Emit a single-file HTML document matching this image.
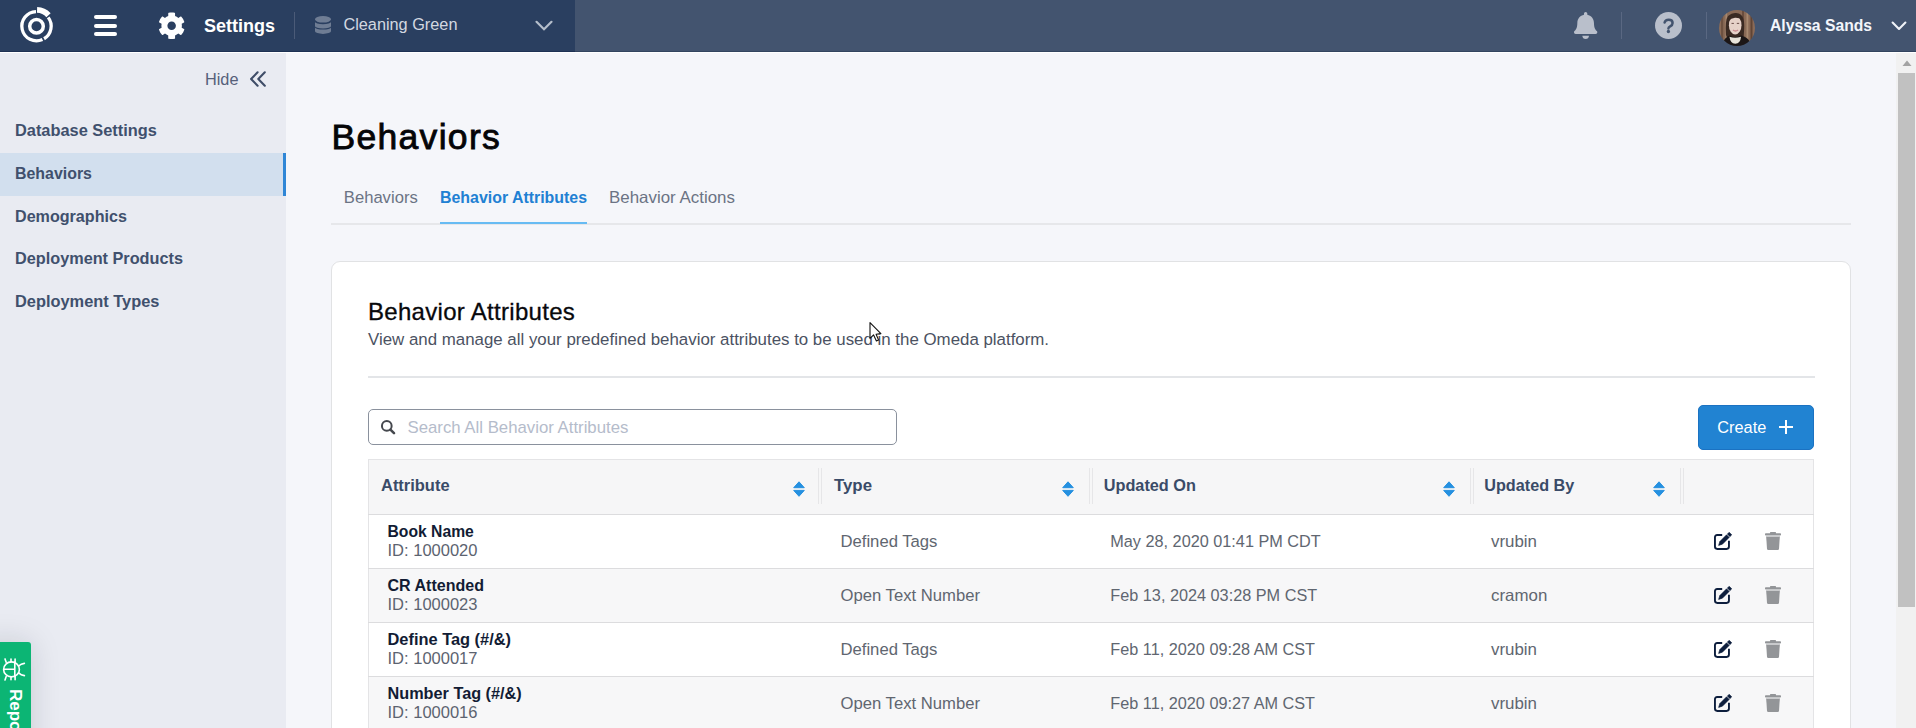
<!DOCTYPE html>
<html><head><meta charset="utf-8"><style>
*{box-sizing:border-box;margin:0;padding:0}
html,body{width:1916px;height:728px;overflow:hidden;font-family:"Liberation Sans",sans-serif;background:#f5f6fa;position:relative}
.t{position:absolute;white-space:nowrap}
.b{position:absolute}
svg{position:absolute;overflow:visible}
</style></head><body>
<div class="b" style="left:0;top:0;width:1916px;height:52px;background:#43546f"></div>
<div class="b" style="left:0;top:0;width:575px;height:52px;background:#2a3f60"></div>
<div class="b" style="left:0;top:51px;width:575px;height:1px;background:#1d3153"></div>
<div class="b" style="left:575px;top:51px;width:1341px;height:1px;background:#33445f"></div>
<div class="b" style="left:0;top:52px;width:1916px;height:1px;background:#ffffff"></div>
<svg style="left:0;top:0" width="80" height="52" viewBox="0 0 80 52">
<circle cx="36.5" cy="26.2" r="6.8" fill="none" stroke="#fff" stroke-width="3.5"/>
<path d="M 35.99 11.56 A 14.65 14.65 0 1 0 42.46 39.58" fill="none" stroke="#fff" stroke-width="3.3"/>
<path d="M 44.05 38.76 A 14.65 14.65 0 0 0 48.20 17.38" fill="none" stroke="#fff" stroke-width="3.3"/>
<path d="M 37.07 9.91 A 16.3 16.3 0 0 1 48.52 15.19" fill="none" stroke="#fff" stroke-width="5.8"/>
</svg>
<div class="b" style="left:94px;top:15px;width:23px;height:4px;border-radius:2px;background:#fff"></div>
<div class="b" style="left:94px;top:23.5px;width:23px;height:4px;border-radius:2px;background:#fff"></div>
<div class="b" style="left:94px;top:32px;width:23px;height:4px;border-radius:2px;background:#fff"></div>
<svg style="left:158.3px;top:11.8px" width="27.3" height="27.5" viewBox="0 0 512 512" preserveAspectRatio="none">
<path fill="#fff" d="M487.4 315.7l-42.6-24.6c4.3-23.2 4.3-47 0-70.2l42.6-24.6c4.9-2.8 7.1-8.6 5.5-14-11.1-35.6-30-67.8-54.7-94.6-3.8-4.1-10-5.1-14.8-2.3L380.8 110c-17.9-15.4-38.5-27.3-60.8-35.1V25.8c0-5.600-3.900-10.500-9.400-11.700-36.700-8.200-74.300-7.800-109.200 0-5.500 1.200-9.400 6.100-9.400 11.700V75c-22.2 7.9-42.8 19.8-60.8 35.1L88.7 85.5c-4.900-2.800-11-1.900-14.800 2.300-24.700 26.700-43.600 58.900-54.700 94.600-1.700 5.400.600 11.200 5.500 14L67.300 221c-4.300 23.200-4.300 47 0 70.200l-42.600 24.600c-4.900 2.800-7.100 8.600-5.500 14 11.100 35.600 30 67.800 54.700 94.600 3.800 4.100 10 5.100 14.800 2.300l42.600-24.600c17.900 15.400 38.500 27.300 60.800 35.100v49.200c0 5.600 3.900 10.500 9.400 11.700 36.700 8.200 74.300 7.800 109.200 0 5.500-1.200 9.400-6.100 9.400-11.700v-49.200c22.200-7.900 42.800-19.800 60.800-35.100l42.600 24.600c4.900 2.800 11 1.900 14.800-2.300 24.700-26.700 43.600-58.900 54.700-94.600 1.500-5.500-.7-11.300-5.600-14.100zM256 336c-44.100 0-80-35.900-80-80s35.900-80 80-80 80 35.900 80 80-35.900 80-80 80z"/>
</svg>
<div class="t" style="left:204px;top:17px;font-size:18px;line-height:18px;font-weight:bold;color:#fff;">Settings</div>
<div class="b" style="left:294px;top:12px;width:1px;height:27px;background:#4b5b78"></div>
<svg style="left:315px;top:16px" width="16" height="18" viewBox="0 0 16 18">
<ellipse cx="8" cy="3.3" rx="8" ry="3.3" fill="#6f7d94"/>
<path d="M0 6 A8 2.2 0 0 0 16 6 V10.3 A8 2.1 0 0 1 0 10.3Z" fill="#6f7d94"/>
<path d="M0 11.6 A8 1.9 0 0 0 16 11.6 V15.2 A8 2.7 0 0 1 0 15.2Z" fill="#6f7d94"/>
</svg>
<div class="t" style="left:343.4px;top:16px;font-size:16.3px;line-height:16.3px;font-weight:normal;color:#d3d8e0;">Cleaning Green</div>
<svg style="left:535px;top:20px" width="18" height="12" viewBox="0 0 18 12">
<path d="M1.5 1.8 L9 9.3 L16.5 1.8" fill="none" stroke="#b5becb" stroke-width="2.2" stroke-linecap="round"/>
</svg>
<svg style="left:1574px;top:12px" width="23.3" height="27" viewBox="0 0 448 512" preserveAspectRatio="none">
<path fill="#b9bfcb" d="M224 512c35.300 0 63.900-28.700 63.900-64H160.100c0 35.300 28.600 64 63.900 64zm215.400-149.700c-19.300-20.800-55.500-52-55.500-154.300 0-77.700-54.500-139.900-127.900-155.200V32c0-17.700-14.300-32-32-32s-32 14.300-32 32v20.800C118.600 68.100 64.100 130.300 64.100 208c0 102.300-36.200 133.500-55.500 154.300-6 6.400-8.600 14.100-8.600 21.700.1 16.400 13 32 32.100 32h383.800c19.100 0 32-15.600 32.100-32 .1-7.600-2.600-15.300-8.600-21.700z"/>
</svg>
<div class="b" style="left:1621px;top:12px;width:1px;height:27px;background:#5a6882"></div>
<svg style="left:1655px;top:12px" width="27" height="27" viewBox="0 0 27 27">
<circle cx="13.5" cy="13.5" r="13.5" fill="#b9bfcb"/>
<path d="M9.6 10.6 Q10.2 7.7 13.7 7.7 Q17.6 7.7 17.6 10.9 Q17.6 13 15.2 14.3 Q13.4 15.3 13.4 16.6" fill="none" stroke="#43546f" stroke-width="2.5" stroke-linecap="round"/>
<circle cx="13.4" cy="19.5" r="1.65" fill="#43546f"/>
</svg>
<div class="b" style="left:1706px;top:12px;width:1px;height:27px;background:#5a6882"></div>
<svg style="left:1719px;top:10px" width="36" height="36" viewBox="0 0 36 36">
<defs><clipPath id="av"><circle cx="18" cy="18" r="18"/></clipPath>
<filter id="bl" x="-10%" y="-10%" width="120%" height="120%"><feGaussianBlur stdDeviation="0.45"/></filter></defs>
<g clip-path="url(#av)"><g filter="url(#bl)">
<rect width="36" height="36" fill="#8a6b56"/>
<rect x="2" y="0" width="2.2" height="36" fill="#6e5140"/>
<rect x="6.5" y="0" width="1.6" height="36" fill="#a58770"/>
<rect x="23" y="0" width="2" height="36" fill="#6a4d3c"/>
<rect x="27.5" y="0" width="1.8" height="36" fill="#a8896f"/>
<rect x="31.5" y="0" width="2" height="36" fill="#5f4535"/>
<path d="M7 25 Q6 10 9 6 Q13 2.5 17 3 Q23 3.5 24.5 9 Q26 15 24.5 26 Q22 29 19 28 L12 28 Q8 29 7 25Z" fill="#3a2a24"/>
<ellipse cx="16.2" cy="15.2" rx="6.3" ry="9.3" fill="#e6d2c8"/>
<path d="M9.5 9 Q12 5 17 5.2 Q22 5.5 23 10 Q20 7.5 16 7.8 Q12 8 9.5 11Z" fill="#3a2a24"/>
<path d="M12.5 13.4 h2.4 M17.8 13.4 h2.4" stroke="#6b4f4a" stroke-width="1"/>
<path d="M14 20 Q16.5 22 19 20" stroke="#c98a8e" stroke-width="1.3" fill="none"/>
<path d="M3 36 Q5 27 11 25.5 Q16 29 22 25.5 Q30 27 33 36Z" fill="#1b1715"/>
<path d="M10.5 26.8 Q16 28.5 22 26.8 Q21.5 33.5 16.2 33.8 Q11.2 33.5 10.5 26.8Z" fill="#e8e4da"/>
</g></g></svg>
<div class="t" style="left:1770px;top:18px;font-size:15.7px;line-height:15.7px;font-weight:bold;color:#f3f6fb;">Alyssa Sands</div>
<svg style="left:1890px;top:20px" width="18" height="12" viewBox="0 0 18 12">
<path d="M2.6 2.6 L9 8.9 L15.4 2.6" fill="none" stroke="#f0f3f8" stroke-width="2.1" stroke-linecap="round" stroke-linejoin="round"/>
</svg>
<div class="b" style="left:0;top:53px;width:286px;height:675px;background:#e9ebf2"></div>
<div class="t" style="left:205px;top:71px;font-size:16.3px;line-height:16.3px;font-weight:normal;color:#56607a;">Hide</div>
<svg style="left:250px;top:71px" width="17" height="17" viewBox="0 0 17 17">
<path d="M7.6 1.3 L1.1 8 L7.6 14.7 M14.8 1.3 L8.3 8 L14.8 14.7" fill="none" stroke="#3f4d68" stroke-width="2.1" stroke-linecap="round" stroke-linejoin="round"/>
</svg>
<div class="b" style="left:0;top:153px;width:286px;height:43px;background:#d2dfee"></div>
<div class="b" style="left:283px;top:153px;width:3px;height:43px;background:#2f86d6"></div>
<div class="t" style="left:15px;top:122px;font-size:16.38px;line-height:16.38px;font-weight:bold;color:#40506d;">Database Settings</div>
<div class="t" style="left:15px;top:166px;font-size:15.92px;line-height:15.92px;font-weight:bold;color:#40506d;">Behaviors</div>
<div class="t" style="left:15px;top:208px;font-size:16.12px;line-height:16.12px;font-weight:bold;color:#40506d;">Demographics</div>
<div class="t" style="left:15px;top:250px;font-size:16.26px;line-height:16.26px;font-weight:bold;color:#40506d;">Deployment Products</div>
<div class="t" style="left:15px;top:293px;font-size:16.39px;line-height:16.39px;font-weight:bold;color:#40506d;">Deployment Types</div>
<div class="b" style="left:-20px;top:642px;width:51px;height:120px;background:#0cb574;border-radius:3px;box-shadow:0 0 30px rgba(20,25,40,.15)"></div>
<svg style="left:0px;top:650px" width="31" height="40" viewBox="0 0 31 40">
<g fill="none" stroke="#fff" stroke-width="1.6" stroke-linecap="round">
<ellipse cx="11.5" cy="19.4" rx="7.9" ry="7.5"/>
<path d="M4 19.2 H14.8 M14.8 12.1 V26.7"/>
<path d="M18.6 16 Q21 13.8 24.4 13.4 M18.6 22.9 Q21 25.1 24.4 25.6"/>
<path d="M5 8.9 L6.2 12.2 M11 9 V11.7 M15.1 9 V12.2 M5 29.9 L6.2 26.6 M11 29.8 V27.1 M15.1 29.8 V26.6"/>
</g></svg>
<div class="t" style="left:7px;top:688.5px;font-size:17px;line-height:17px;font-weight:bold;color:#fff;transform-origin:0 0;transform:translate(17px,0) rotate(90deg)">Report</div>
<div class="t" style="left:331.5px;top:120px;font-size:35.5px;line-height:35.5px;font-weight:normal;color:#050507;-webkit-text-stroke:0.85px #050507;letter-spacing:1.3px;">Behaviors</div>
<div class="t" style="left:343.8px;top:190px;font-size:16.64px;line-height:16.64px;font-weight:normal;color:#6b7384;">Behaviors</div>
<div class="t" style="left:440px;top:190px;font-size:15.91px;line-height:15.91px;font-weight:bold;color:#2180d3;">Behavior Attributes</div>
<div class="t" style="left:609px;top:190px;font-size:16.92px;line-height:16.92px;font-weight:normal;color:#6b7384;">Behavior Actions</div>
<div class="b" style="left:331px;top:223px;width:1520px;height:2px;background:#e6e7ea"></div>
<div class="b" style="left:440px;top:222px;width:147px;height:2px;background:#67bbf3"></div>
<div class="b" style="left:331px;top:261px;width:1520px;height:500px;background:#fff;border:1px solid #e1e2e4;border-radius:9px"></div>
<div class="t" style="left:368px;top:300px;font-size:24px;line-height:24px;font-weight:normal;color:#08080c;-webkit-text-stroke:0.3px #08080c;letter-spacing:0.3px;">Behavior Attributes</div>
<div class="t" style="left:368px;top:332px;font-size:16.87px;line-height:16.87px;font-weight:normal;color:#4b5262;">View and manage all your predefined behavior attributes to be used in the Omeda platform.</div>
<div class="b" style="left:368px;top:376px;width:1447px;height:2px;background:#e3e5e8"></div>
<div class="b" style="left:368px;top:409px;width:529px;height:36px;border:1px solid #8a919d;border-radius:5px;background:#fff"></div>
<svg style="left:380px;top:419px" width="16" height="16" viewBox="0 0 16 16">
<circle cx="6.8" cy="6.9" r="4.85" fill="none" stroke="#45484e" stroke-width="2"/>
<path d="M10.4 10.6 L14 14.1" stroke="#45484e" stroke-width="2.6" stroke-linecap="round"/>
</svg>
<div class="t" style="left:407.5px;top:420px;font-size:16.78px;line-height:16.78px;font-weight:normal;color:#b5bccb;">Search All Behavior Attributes</div>
<div class="b" style="left:1698px;top:405px;width:116px;height:45px;background:#2183d2;border:1px solid #1b72c2;border-radius:5px"></div>
<div class="t" style="left:1717.3px;top:419px;font-size:16.32px;line-height:16.32px;font-weight:normal;color:#fff;">Create</div>
<div class="b" style="left:1779px;top:426px;width:14px;height:2.4px;background:#fff"></div>
<div class="b" style="left:1784.8px;top:420.2px;width:2.4px;height:14px;background:#fff"></div>
<div class="b" style="left:368px;top:459px;width:1446px;height:300px;border:1px solid #e4e4e6;background:#fff"></div>
<div class="b" style="left:369px;top:460px;width:1444px;height:54px;background:#f6f6f7"></div>
<div class="b" style="left:368px;top:514px;width:1446px;height:1px;background:#dcdcde"></div>
<div class="t" style="left:381px;top:477px;font-size:16.47px;line-height:16.47px;font-weight:bold;color:#3a4b68;">Attribute</div>
<div class="t" style="left:834px;top:478px;font-size:16.82px;line-height:16.82px;font-weight:bold;color:#3a4b68;">Type</div>
<div class="t" style="left:1103.7px;top:477px;font-size:16.3px;line-height:16.3px;font-weight:bold;color:#3a4b68;">Updated On</div>
<div class="t" style="left:1484.3px;top:477px;font-size:16.2px;line-height:16.2px;font-weight:bold;color:#3a4b68;">Updated By</div>
<svg style="left:793px;top:481px" width="12" height="16" viewBox="0 0 12 16">
<path d="M6 0.8 L11.3 6.7 L0.7 6.7Z M0.7 9.4 L11.3 9.4 L6 15.3Z" fill="#2590e0" stroke="#2590e0" stroke-width="1" stroke-linejoin="round"/>
</svg>
<svg style="left:1062px;top:481px" width="12" height="16" viewBox="0 0 12 16">
<path d="M6 0.8 L11.3 6.7 L0.7 6.7Z M0.7 9.4 L11.3 9.4 L6 15.3Z" fill="#2590e0" stroke="#2590e0" stroke-width="1" stroke-linejoin="round"/>
</svg>
<svg style="left:1443px;top:481px" width="12" height="16" viewBox="0 0 12 16">
<path d="M6 0.8 L11.3 6.7 L0.7 6.7Z M0.7 9.4 L11.3 9.4 L6 15.3Z" fill="#2590e0" stroke="#2590e0" stroke-width="1" stroke-linejoin="round"/>
</svg>
<svg style="left:1653px;top:481px" width="12" height="16" viewBox="0 0 12 16">
<path d="M6 0.8 L11.3 6.7 L0.7 6.7Z M0.7 9.4 L11.3 9.4 L6 15.3Z" fill="#2590e0" stroke="#2590e0" stroke-width="1" stroke-linejoin="round"/>
</svg>
<div class="b" style="left:818px;top:468px;width:1px;height:36px;background:#e6e6e8"></div>
<div class="b" style="left:821px;top:468px;width:1px;height:36px;background:#e6e6e8"></div>
<div class="b" style="left:1088.5px;top:468px;width:1px;height:36px;background:#e6e6e8"></div>
<div class="b" style="left:1091.5px;top:468px;width:1px;height:36px;background:#e6e6e8"></div>
<div class="b" style="left:1469.5px;top:468px;width:1px;height:36px;background:#e6e6e8"></div>
<div class="b" style="left:1472.5px;top:468px;width:1px;height:36px;background:#e6e6e8"></div>
<div class="b" style="left:1679.5px;top:468px;width:1px;height:36px;background:#e6e6e8"></div>
<div class="b" style="left:1682.5px;top:468px;width:1px;height:36px;background:#e6e6e8"></div>
<div class="b" style="left:369px;top:515px;width:1444px;height:53px;background:#ffffff"></div>
<div class="b" style="left:368px;top:568px;width:1446px;height:1px;background:#dcdcde"></div>
<div class="t" style="left:387.5px;top:524px;font-size:15.7px;line-height:15.7px;font-weight:bold;color:#121c34;">Book Name</div>
<div class="t" style="left:387.5px;top:543px;font-size:16.52px;line-height:16.52px;font-weight:normal;color:#5c6370;">ID: 1000020</div>
<div class="t" style="left:840.5px;top:534px;font-size:16.67px;line-height:16.67px;font-weight:normal;color:#606670;">Defined Tags</div>
<div class="t" style="left:1110.3px;top:533px;font-size:16.25px;line-height:16.25px;font-weight:normal;color:#606670;">May 28, 2020 01:41 PM CDT</div>
<div class="t" style="left:1491px;top:534px;font-size:16.89px;line-height:16.89px;font-weight:normal;color:#606670;">vrubin</div>
<svg style="left:1714px;top:532px" width="18" height="18" viewBox="0 0 18 18">
<path d="M8.2 3 H3.3 Q0.95 3 0.95 5.3 V14.6 Q0.95 16.95 3.3 16.95 H12.6 Q14.95 16.95 14.95 14.6 V8.8" fill="none" stroke="#0d1e3d" stroke-width="1.9"/>
<path d="M4.6 13.4 L5.8 9.6 L12.6 2.8 L15.2 5.4 L8.4 12.2Z" fill="#0d1e3d" stroke="#0d1e3d" stroke-width="0.6" stroke-linejoin="round"/>
<path d="M13.3 2.1 L15.2 0.2 L17.8 2.8 L15.9 4.7Z" fill="#0d1e3d" stroke="#0d1e3d" stroke-width="0.5" stroke-linejoin="round"/>
</svg>
<svg style="left:1765px;top:532px" width="16" height="18" viewBox="0 0 16 18">
<rect x="5" y="0" width="6" height="2" rx="0.6" fill="#939598"/>
<rect x="0" y="1.2" width="16" height="2.4" rx="0.8" fill="#939598"/>
<rect x="1" y="3.6" width="14" height="1.5" fill="#c9cacc"/>
<path d="M1.2 5 H14.8 L14 16.8 Q13.9 18 12.8 18 H3.2 Q2.1 18 2 16.8Z" fill="#939598"/>
</svg>
<div class="b" style="left:369px;top:569px;width:1444px;height:53px;background:#f7f7f8"></div>
<div class="b" style="left:368px;top:622px;width:1446px;height:1px;background:#dcdcde"></div>
<div class="t" style="left:387.5px;top:577px;font-size:16.05px;line-height:16.05px;font-weight:bold;color:#121c34;">CR Attended</div>
<div class="t" style="left:387.5px;top:597px;font-size:16.52px;line-height:16.52px;font-weight:normal;color:#5c6370;">ID: 1000023</div>
<div class="t" style="left:840.5px;top:588px;font-size:16.67px;line-height:16.67px;font-weight:normal;color:#606670;">Open Text Number</div>
<div class="t" style="left:1110.3px;top:587px;font-size:16.25px;line-height:16.25px;font-weight:normal;color:#606670;">Feb 13, 2024 03:28 PM CST</div>
<div class="t" style="left:1491px;top:588px;font-size:16.89px;line-height:16.89px;font-weight:normal;color:#606670;">cramon</div>
<svg style="left:1714px;top:586px" width="18" height="18" viewBox="0 0 18 18">
<path d="M8.2 3 H3.3 Q0.95 3 0.95 5.3 V14.6 Q0.95 16.95 3.3 16.95 H12.6 Q14.95 16.95 14.95 14.6 V8.8" fill="none" stroke="#0d1e3d" stroke-width="1.9"/>
<path d="M4.6 13.4 L5.8 9.6 L12.6 2.8 L15.2 5.4 L8.4 12.2Z" fill="#0d1e3d" stroke="#0d1e3d" stroke-width="0.6" stroke-linejoin="round"/>
<path d="M13.3 2.1 L15.2 0.2 L17.8 2.8 L15.9 4.7Z" fill="#0d1e3d" stroke="#0d1e3d" stroke-width="0.5" stroke-linejoin="round"/>
</svg>
<svg style="left:1765px;top:586px" width="16" height="18" viewBox="0 0 16 18">
<rect x="5" y="0" width="6" height="2" rx="0.6" fill="#939598"/>
<rect x="0" y="1.2" width="16" height="2.4" rx="0.8" fill="#939598"/>
<rect x="1" y="3.6" width="14" height="1.5" fill="#c9cacc"/>
<path d="M1.2 5 H14.8 L14 16.8 Q13.9 18 12.8 18 H3.2 Q2.1 18 2 16.8Z" fill="#939598"/>
</svg>
<div class="b" style="left:369px;top:623px;width:1444px;height:53px;background:#ffffff"></div>
<div class="b" style="left:368px;top:676px;width:1446px;height:1px;background:#dcdcde"></div>
<div class="t" style="left:387.5px;top:631px;font-size:16.4px;line-height:16.4px;font-weight:bold;color:#121c34;">Define Tag (#/&amp;)</div>
<div class="t" style="left:387.5px;top:651px;font-size:16.52px;line-height:16.52px;font-weight:normal;color:#5c6370;">ID: 1000017</div>
<div class="t" style="left:840.5px;top:642px;font-size:16.67px;line-height:16.67px;font-weight:normal;color:#606670;">Defined Tags</div>
<div class="t" style="left:1110.3px;top:641px;font-size:16.25px;line-height:16.25px;font-weight:normal;color:#606670;">Feb 11, 2020 09:28 AM CST</div>
<div class="t" style="left:1491px;top:642px;font-size:16.89px;line-height:16.89px;font-weight:normal;color:#606670;">vrubin</div>
<svg style="left:1714px;top:640px" width="18" height="18" viewBox="0 0 18 18">
<path d="M8.2 3 H3.3 Q0.95 3 0.95 5.3 V14.6 Q0.95 16.95 3.3 16.95 H12.6 Q14.95 16.95 14.95 14.6 V8.8" fill="none" stroke="#0d1e3d" stroke-width="1.9"/>
<path d="M4.6 13.4 L5.8 9.6 L12.6 2.8 L15.2 5.4 L8.4 12.2Z" fill="#0d1e3d" stroke="#0d1e3d" stroke-width="0.6" stroke-linejoin="round"/>
<path d="M13.3 2.1 L15.2 0.2 L17.8 2.8 L15.9 4.7Z" fill="#0d1e3d" stroke="#0d1e3d" stroke-width="0.5" stroke-linejoin="round"/>
</svg>
<svg style="left:1765px;top:640px" width="16" height="18" viewBox="0 0 16 18">
<rect x="5" y="0" width="6" height="2" rx="0.6" fill="#939598"/>
<rect x="0" y="1.2" width="16" height="2.4" rx="0.8" fill="#939598"/>
<rect x="1" y="3.6" width="14" height="1.5" fill="#c9cacc"/>
<path d="M1.2 5 H14.8 L14 16.8 Q13.9 18 12.8 18 H3.2 Q2.1 18 2 16.8Z" fill="#939598"/>
</svg>
<div class="b" style="left:369px;top:677px;width:1444px;height:53px;background:#f7f7f8"></div>
<div class="b" style="left:368px;top:730px;width:1446px;height:1px;background:#dcdcde"></div>
<div class="t" style="left:387.5px;top:685px;font-size:16.25px;line-height:16.25px;font-weight:bold;color:#121c34;">Number Tag (#/&amp;)</div>
<div class="t" style="left:387.5px;top:705px;font-size:16.52px;line-height:16.52px;font-weight:normal;color:#5c6370;">ID: 1000016</div>
<div class="t" style="left:840.5px;top:696px;font-size:16.67px;line-height:16.67px;font-weight:normal;color:#606670;">Open Text Number</div>
<div class="t" style="left:1110.3px;top:695px;font-size:16.25px;line-height:16.25px;font-weight:normal;color:#606670;">Feb 11, 2020 09:27 AM CST</div>
<div class="t" style="left:1491px;top:696px;font-size:16.89px;line-height:16.89px;font-weight:normal;color:#606670;">vrubin</div>
<svg style="left:1714px;top:694px" width="18" height="18" viewBox="0 0 18 18">
<path d="M8.2 3 H3.3 Q0.95 3 0.95 5.3 V14.6 Q0.95 16.95 3.3 16.95 H12.6 Q14.95 16.95 14.95 14.6 V8.8" fill="none" stroke="#0d1e3d" stroke-width="1.9"/>
<path d="M4.6 13.4 L5.8 9.6 L12.6 2.8 L15.2 5.4 L8.4 12.2Z" fill="#0d1e3d" stroke="#0d1e3d" stroke-width="0.6" stroke-linejoin="round"/>
<path d="M13.3 2.1 L15.2 0.2 L17.8 2.8 L15.9 4.7Z" fill="#0d1e3d" stroke="#0d1e3d" stroke-width="0.5" stroke-linejoin="round"/>
</svg>
<svg style="left:1765px;top:694px" width="16" height="18" viewBox="0 0 16 18">
<rect x="5" y="0" width="6" height="2" rx="0.6" fill="#939598"/>
<rect x="0" y="1.2" width="16" height="2.4" rx="0.8" fill="#939598"/>
<rect x="1" y="3.6" width="14" height="1.5" fill="#c9cacc"/>
<path d="M1.2 5 H14.8 L14 16.8 Q13.9 18 12.8 18 H3.2 Q2.1 18 2 16.8Z" fill="#939598"/>
</svg>
<svg style="left:869px;top:322px" width="14" height="22" viewBox="0 0 14 22">
<path d="M1 0.6 L1 16.3 L4.6 12.9 L7.4 19 L9.6 18.1 L7.1 12.2 L11.9 11.6Z" fill="#fff" stroke="#111" stroke-width="1.1" stroke-linejoin="round"/>
</svg>
<div class="b" style="left:1896px;top:53px;width:20px;height:675px;background:#f1f1f1"></div>
<div class="b" style="left:1898px;top:73px;width:17px;height:534px;background:#c1c1c1"></div>
<svg style="left:1902px;top:60px" width="10" height="7" viewBox="0 0 10 7"><path d="M5 0.5 L9.5 6 L0.5 6Z" fill="#a3a3a3"/></svg>
</body></html>
